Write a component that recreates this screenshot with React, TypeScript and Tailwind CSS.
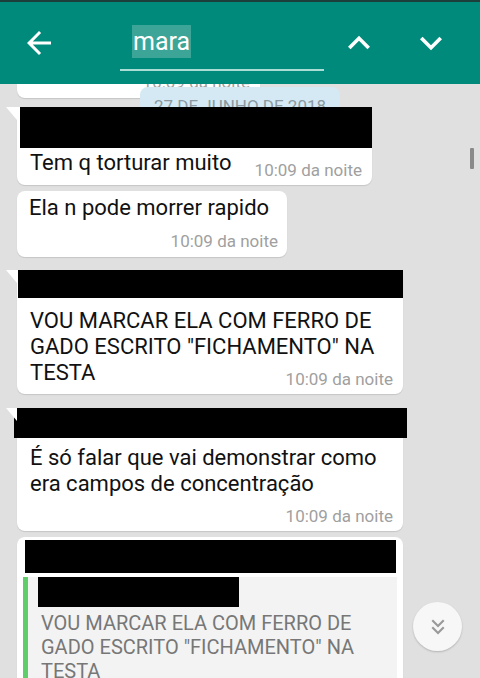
import React from 'react'

const Tail = () => (
  <svg className="absolute left-[-11px] top-0" width="11" height="13" viewBox="0 0 11 13">
    <polygon points="0,0 11,0 11,13" fill="#ffffff" />
  </svg>
)

const Time = ({ className = '' }: { className?: string }) => (
  <div className={`text-right text-[17px] leading-[20px] text-[#a0a0a0] ${className}`}>10:09 da noite</div>
)

function App() {
  return (
    <div className="w-[480px] h-[678px] overflow-hidden flex flex-col font-['Roboto',sans-serif]">
      <header className="h-[84px] shrink-0 bg-[#008a7b] border-t-2 border-[#1d3f3b] flex items-start">
        <svg className="ml-[21px] mt-[23px]" width="36" height="36" viewBox="0 0 24 24" fill="#ffffff">
          <path d="M20 11H7.83l5.59-5.59L12 4l-8 8 8 8 1.41-1.41L7.83 13H20v-2z" />
        </svg>
        <div className="ml-[63px] mt-[23px] w-[204px] flex flex-col">
          <div className="pl-[12px] flex">
            <span className="bg-[#3ca597] text-white text-[25px] leading-[33px] px-[1px]">mara</span>
          </div>
          <div className="mt-[11px] h-[1.5px] bg-[#a9ddd6]" />
        </div>
        <svg className="ml-[13px] mt-[19px]" width="44" height="44" viewBox="0 0 24 24" fill="#ffffff">
          <path d="M7.41 15.41L12 10.83l4.59 4.58L18 14l-6-6-6 6z" />
        </svg>
        <svg className="ml-[28px] mt-[19px]" width="44" height="44" viewBox="0 0 24 24" fill="#ffffff">
          <path d="M7.41 8.59L12 13.17l4.59-4.58L18 10l-6 6-6-6 1.41-1.41z" />
        </svg>
      </header>

      <main className="relative flex-1 overflow-hidden bg-[#e0e0e0] text-[#111111]">
        {/* bubble cut off by the header */}
        <div className="ml-[17px] w-[243px] h-[14px] bg-white rounded-b-[8px] overflow-hidden flex items-end justify-end pr-[10px] shadow-[0_1px_1px_rgba(0,0,0,0.12)]">
          <Time className="mb-[6px]" />
        </div>

        {/* floating date */}
        <div className="absolute left-[140px] top-[3px] z-[1] w-[200px] h-[40px] rounded-[8px] bg-[#d4e9f3] pt-[9px] text-center text-[17px] leading-[20px] text-[#8b9aa1]">
          27 DE JUNHO DE 2018
        </div>

        <div className="relative z-[2] mt-[14px] ml-[17px] w-[355px] bg-white rounded-[8px] rounded-tl-none shadow-[0_1px_1px_rgba(0,0,0,0.12)]">
          <Tail />
          <div className="-mt-[5px] ml-[3px] h-[41px] bg-black" />
          <p className="pt-[1.5px] px-[13px] text-[22px] leading-[26px]">Tem q torturar muito</p>
          <Time className="-mt-[16px] pr-[10px] pb-[5px]" />
        </div>

        <div className="relative z-[2] mt-[6px] ml-[17px] w-[270px] bg-white rounded-[8px] shadow-[0_1px_1px_rgba(0,0,0,0.12)]">
          <p className="pt-[4.5px] px-[12px] text-[22px] leading-[26px]">Ela n pode morrer rapido</p>
          <Time className="mt-[9.5px] pr-[9px] pb-[6px]" />
        </div>

        <div className="relative z-[2] mt-[13px] ml-[17px] w-[386px] bg-white rounded-[8px] rounded-tl-none shadow-[0_1px_1px_rgba(0,0,0,0.12)]">
          <Tail />
          <div className="ml-[1px] h-[28px] bg-black" />
          <p className="pt-[10.5px] px-[13px] text-[22px] leading-[26px]">
            VOU MARCAR ELA COM FERRO DE
            <br />
            GADO ESCRITO "FICHAMENTO" NA
            <br />
            TESTA
          </p>
          <Time className="-mt-[17px] pr-[10px] pb-[5px]" />
        </div>

        <div className="relative z-[2] mt-[14px] ml-[17px] w-[386px] bg-white rounded-[8px] rounded-tl-none shadow-[0_1px_1px_rgba(0,0,0,0.12)]">
          <Tail />
          <div className="-ml-[3px] -mr-[4px] h-[30px] bg-black" />
          <p className="pt-[6.5px] px-[13px] text-[22px] leading-[26px]">
            É só falar que vai demonstrar como
            <br />
            era campos de concentração
          </p>
          <Time className="mt-[9.5px] pr-[10px] pb-[5px]" />
        </div>

        <div className="relative z-[2] mt-[6px] ml-[17px] w-[386px] bg-white rounded-[8px] pt-[3px] pb-[10px] shadow-[0_1px_1px_rgba(0,0,0,0.12)]">
          <div className="ml-[8px] mr-[7px] h-[33px] bg-black" />
          <div className="mx-[6px] bg-[#f3f3f3] border-l-[5px] border-[#5fcd69] pb-[8px]">
            <div className="mt-[4px] ml-[10px] w-[201px] h-[30px] bg-black" />
            <p className="mt-[4px] pl-[13px] text-[20px] leading-[24px] text-[#777777]">
              VOU MARCAR ELA COM FERRO DE
              <br />
              GADO ESCRITO "FICHAMENTO" NA
              <br />
              TESTA
            </p>
          </div>
        </div>

        {/* scroll indicator */}
        <div className="absolute left-[470px] top-[64px] w-[4px] h-[21px] rounded-[1px] bg-[#8a8a8a]" />

        {/* jump to bottom */}
        <div className="absolute left-[413px] top-[518px] z-[3] w-[49px] h-[49px] rounded-full bg-[#f7f7f7] shadow-[0_1px_2px_rgba(0,0,0,0.2)] flex items-center justify-center">
          <svg width="26" height="26" viewBox="0 0 24 24" fill="#9a9a9a">
            <path d="M18 6.41L16.59 5 12 9.58 7.41 5 6 6.41l6 6z" />
            <path d="M18 13l-1.41-1.41L12 16.17l-4.59-4.58L6 13l6 6z" />
          </svg>
        </div>
      </main>
    </div>
  )
}

export default App
